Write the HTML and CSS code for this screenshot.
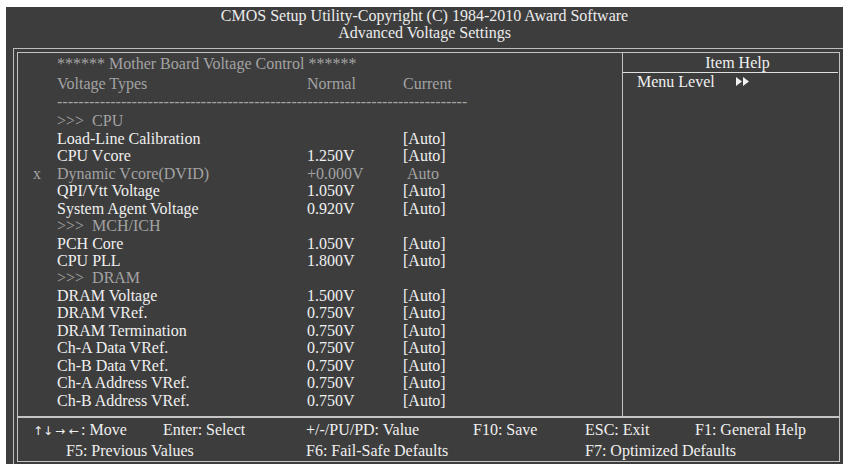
FILE: index.html
```html
<!DOCTYPE html>
<html lang="en">
<head>
  <meta charset="UTF-8" />
  <title>Advanced Voltage Settings</title>
  <link rel="stylesheet" href="styles.css">
</head>
<body>
  <div class="screen">
    <div class="title">
      <div>CMOS Setup Utility-Copyright (C) 1984-2010 Award Software</div>
      <div>Advanced Voltage Settings</div>
    </div>

    <div class="outer">
      <div class="inner">
        <div class="main">
          <div class="list">
            <div class="row head"><span></span><span class="wide">****** Mother Board Voltage Control ******</span></div>
            <div class="row cols dim"><span></span><span>Voltage Types</span><span>Normal</span><span>Current</span></div>
            <div class="row dim"><span></span><span class="wide">-----------------------------------------------------------------------------</span></div>
            <div class="row dim section"><span></span><span class="wide">&gt;&gt;&gt;&nbsp;&nbsp;CPU</span></div>
            <div class="row"><span></span><span>Load-Line Calibration</span><span></span><span>[Auto]</span></div>
            <div class="row"><span></span><span>CPU Vcore</span><span>1.250V</span><span>[Auto]</span></div>
            <div class="row dim"><span>x</span><span>Dynamic Vcore(DVID)</span><span>+0.000V</span><span class="plain">Auto</span></div>
            <div class="row"><span></span><span>QPI/Vtt Voltage</span><span>1.050V</span><span>[Auto]</span></div>
            <div class="row"><span></span><span>System Agent Voltage</span><span>0.920V</span><span>[Auto]</span></div>
            <div class="row dim"><span></span><span class="wide">&gt;&gt;&gt;&nbsp;&nbsp;MCH/ICH</span></div>
            <div class="row"><span></span><span>PCH Core</span><span>1.050V</span><span>[Auto]</span></div>
            <div class="row"><span></span><span>CPU PLL</span><span>1.800V</span><span>[Auto]</span></div>
            <div class="row dim"><span></span><span class="wide">&gt;&gt;&gt;&nbsp;&nbsp;DRAM</span></div>
            <div class="row"><span></span><span>DRAM Voltage</span><span>1.500V</span><span>[Auto]</span></div>
            <div class="row"><span></span><span>DRAM VRef.</span><span>0.750V</span><span>[Auto]</span></div>
            <div class="row"><span></span><span>DRAM Termination</span><span>0.750V</span><span>[Auto]</span></div>
            <div class="row"><span></span><span>Ch-A Data VRef.</span><span>0.750V</span><span>[Auto]</span></div>
            <div class="row"><span></span><span>Ch-B Data VRef.</span><span>0.750V</span><span>[Auto]</span></div>
            <div class="row"><span></span><span>Ch-A Address VRef.</span><span>0.750V</span><span>[Auto]</span></div>
            <div class="row"><span></span><span>Ch-B Address VRef.</span><span>0.750V</span><span>[Auto]</span></div>
          </div>

          <div class="help">
            <div class="help-title">Item Help</div>
            <div class="help-level">
              <span>Menu Level</span>
              <svg width="15" height="9" viewBox="0 0 15 9"><path d="M1 0L7 4.5L1 9Z M8 0L14 4.5L8 9Z" fill="#f0f0f0"/></svg>
            </div>
          </div>
        </div>

        <div class="footer">
          <span><span class="ar v">↑</span><span class="ar v">↓</span><span class="ar">→</span><span class="ar">←</span>: Move</span>
          <span>Enter: Select</span>
          <span>+/-/PU/PD: Value</span>
          <span>F10: Save</span>
          <span>ESC: Exit</span>
          <span>F1: General Help</span>
          <span class="f5">F5: Previous Values</span>
          <span class="f6">F6: Fail-Safe Defaults</span>
          <span class="f7">F7: Optimized Defaults</span>
        </div>
      </div>
    </div>
  </div>
</body>
</html>
```

FILE: styles.css
```css
body {
  margin: 0;
  background: #fff;
  font-family: 'Liberation Serif', 'Times New Roman', serif;
  font-size: 16px;
}
.screen {
  margin: 7px 0 0 6px;
  height: 457px;
  background: #3d3d3d;
  color: #f0f0f0;
  overflow: hidden;
}
.title {
  text-align: center;
  line-height: 17px;
  color: #ececec;
}
.outer {
  margin: 7px 0 0 7px;
  width: 850px;
  padding: 3px;
  border: 1px solid #bdbdbd;
}
.inner {
  width: 821px;
  height: 408px;
  border: 1px solid #c4c4c4;
}
.main { display: flex; height: 363px; }
.list { width: 589px; padding: 2px 0 0 15px; }
.row {
  display: grid;
  grid-template-columns: 24px 250px 96px 1fr;
  line-height: 17.45px;
  white-space: nowrap;
}
.row .wide { grid-column: 2 / 5; }
.row.head { color: #a3a3a3; margin-bottom: 3px; }
.row.section { margin-top: 2px; }
.dim { color: #a3a3a3; }
.plain { padding-left: 4px; }

.help { flex: 1; border-left: 1px solid #c4c4c4; }
.help-title {
  line-height: 19px;
  text-align: center;
  border-bottom: 1px solid #e0e0e0;
  margin-right: 1px;
  padding-left: 14px;
}
.help-level {
  display: flex; align-items: center; gap: 20px;
  line-height: 17px;
  padding-left: 14px;
}

.footer {
  border-top: 2px solid #c4c4c4;
  height: 40px;
  padding: 3px 0 0 15px;
  display: grid;
  grid-template-columns: 130px 143px 167px 112px 110px 1fr;
  line-height: 18px;
  white-space: nowrap;
}
.footer .ar {
  display: inline-block;
  width: 14px;
  text-align: center;
  font-family: 'DejaVu Sans', sans-serif;
  font-size: 12px;
}
.footer .ar.v { width: 10px; }
.footer .f5 { grid-column: 1 / 3; padding-left: 33px; }
.footer .f6 { grid-column: 3 / 5; }
.footer .f7 { grid-column: 5 / 7; }
```
